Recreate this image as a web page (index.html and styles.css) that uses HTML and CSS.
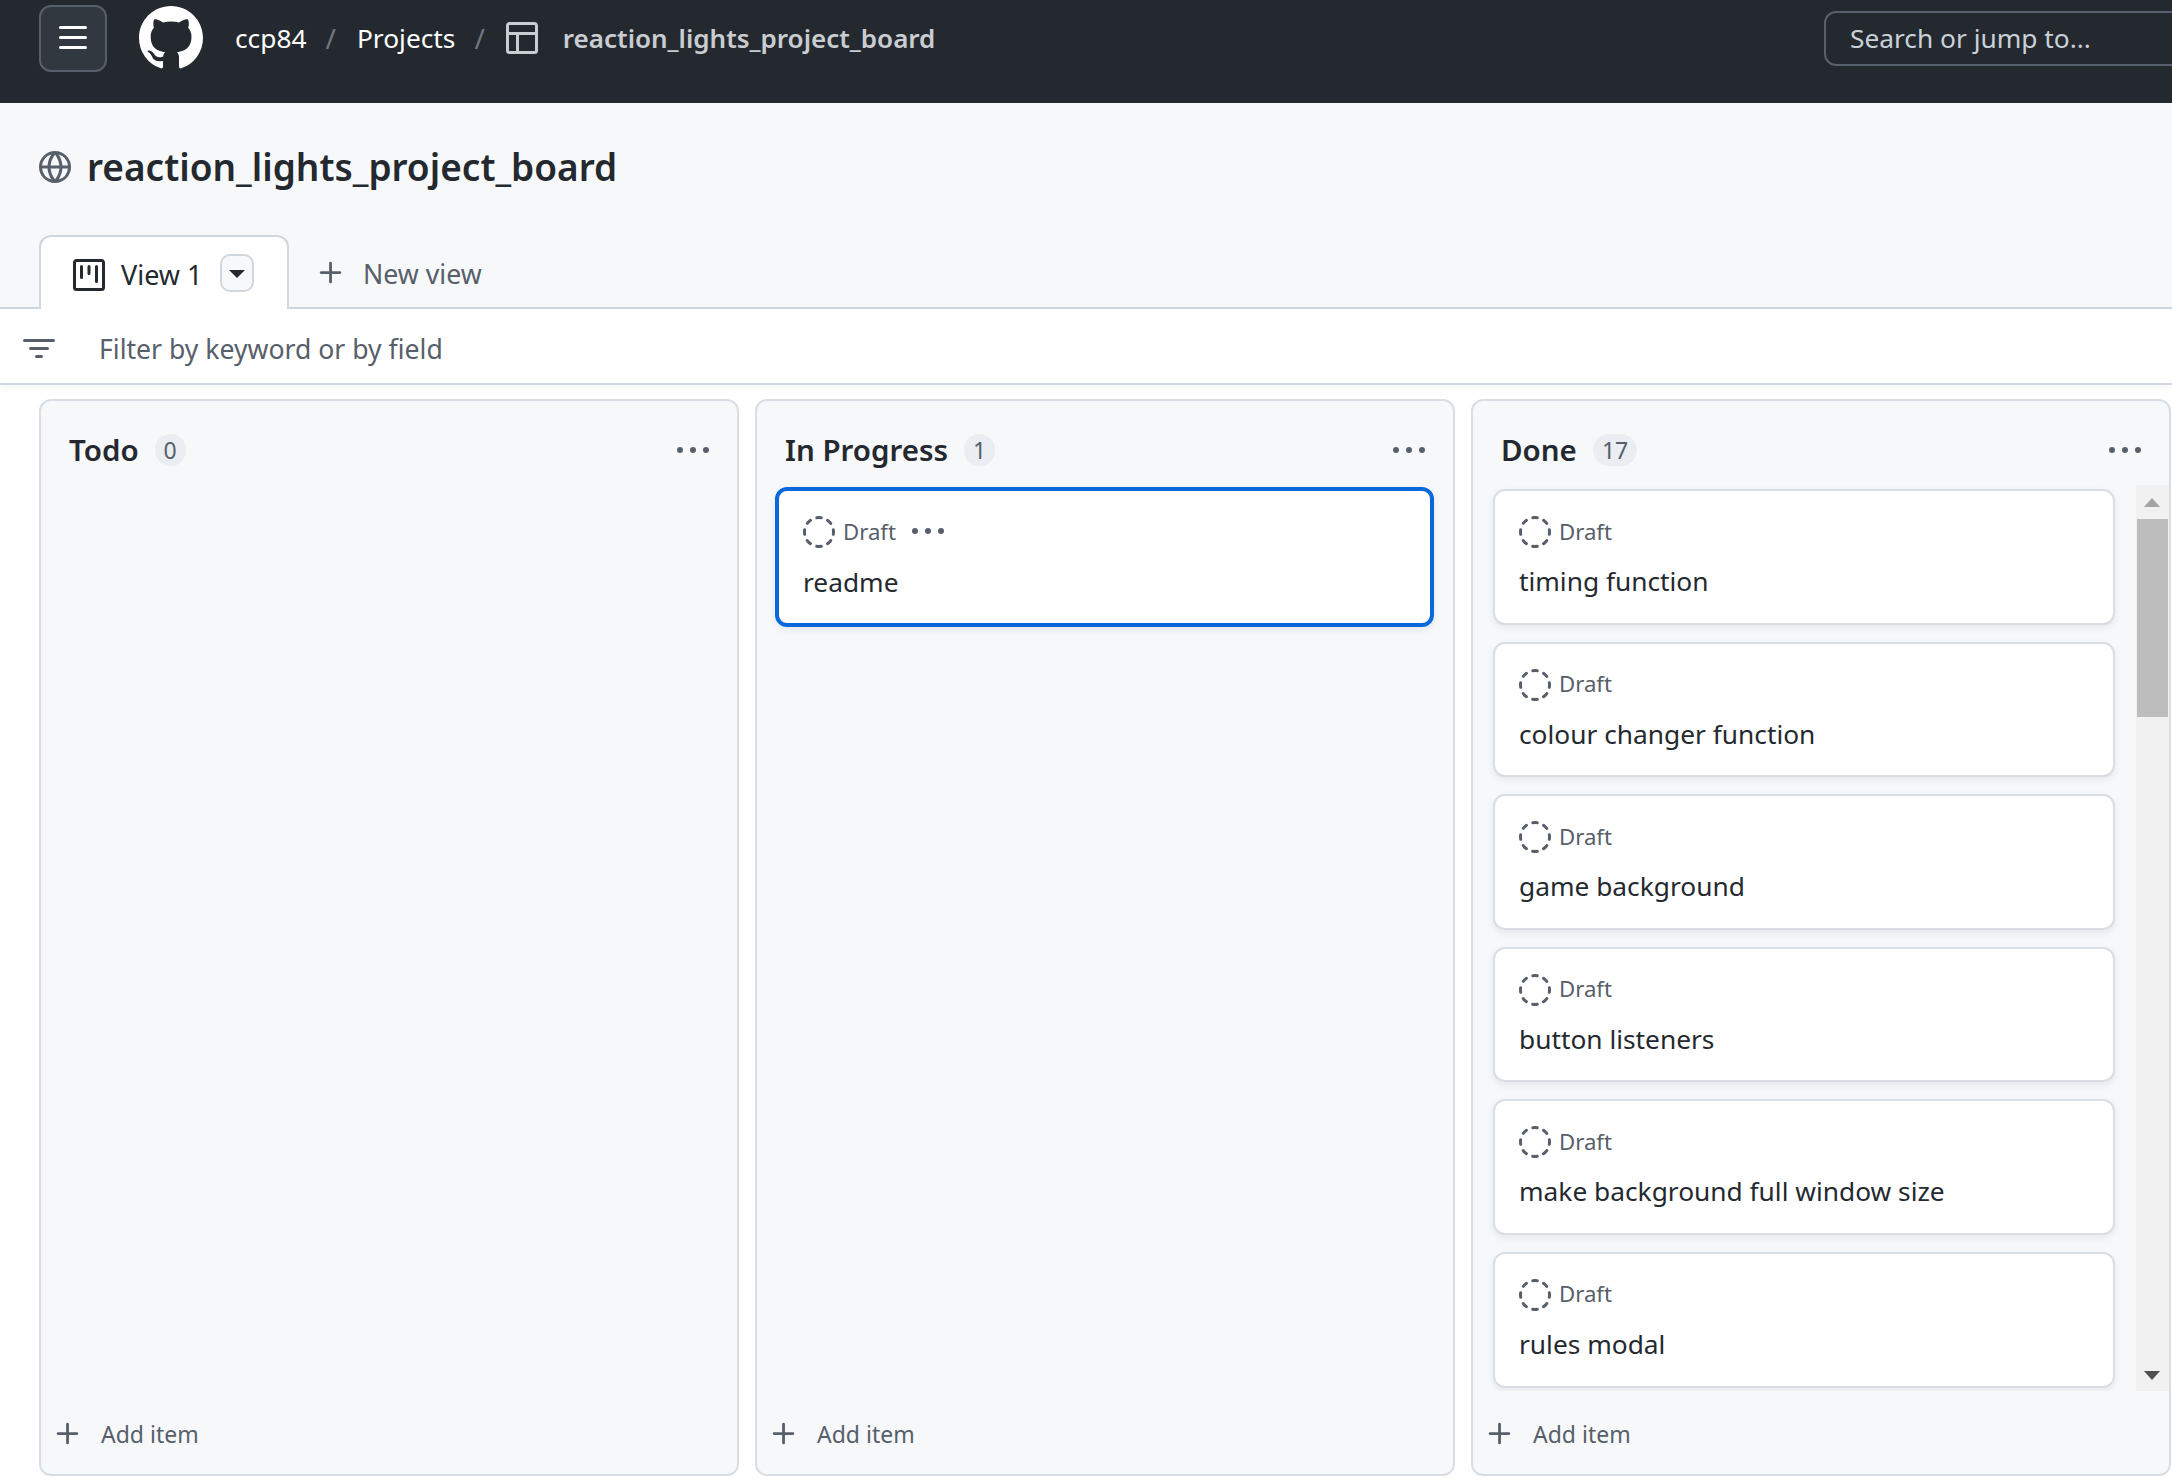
FILE: index.html
```html
<!DOCTYPE html>
<html lang="en">
<head>
<meta charset="utf-8">
<title>reaction_lights_project_board</title>
<link rel="stylesheet" href="styles.css">
</head>
<body>
<svg class="sprite" xmlns="http://www.w3.org/2000/svg">
  <symbol id="i-mark" viewBox="0 0 16 16"><path d="M8 0c4.42 0 8 3.58 8 8a8.013 8.013 0 0 1-5.45 7.59c-.4.08-.55-.17-.55-.38 0-.27.01-1.13.01-2.2 0-.75-.25-1.23-.54-1.48 1.78-.2 3.65-.88 3.65-3.95 0-.88-.31-1.59-.82-2.15.08-.2.36-1.02-.08-2.12 0 0-.67-.22-2.2.82-.64-.18-1.32-.27-2-.27-.68 0-1.36.09-2 .27-1.53-1.03-2.2-.82-2.2-.82-.44 1.1-.16 1.92-.08 2.12-.51.56-.82 1.28-.82 2.15 0 3.06 1.86 3.75 3.64 3.95-.23.2-.44.55-.51 1.07-.46.21-1.61.55-2.33-.66-.15-.24-.6-.83-1.23-.82-.67.01-.27.38.01.53.34.19.73.9.82 1.13.16.45.68 1.31 2.69.94 0 .67.01 1.3.01 1.49 0 .21-.15.45-.55.38A7.995 7.995 0 0 1 0 8c0-4.42 3.58-8 8-8Z"/></symbol>
  <symbol id="i-bars" viewBox="0 0 16 16"><path d="M1 2.75A.75.75 0 0 1 1.75 2h12.5a.75.75 0 0 1 0 1.5H1.75A.75.75 0 0 1 1 2.75Zm0 5A.75.75 0 0 1 1.75 7h12.5a.75.75 0 0 1 0 1.5H1.75A.75.75 0 0 1 1 7.75ZM1.75 12h12.5a.75.75 0 0 1 0 1.5H1.75a.75.75 0 0 1 0-1.5Z"/></symbol>
  <symbol id="i-table" viewBox="0 0 16 16"><path d="M0 1.75C0 .784.784 0 1.75 0h12.5C15.216 0 16 .784 16 1.75v12.5A1.75 1.75 0 0 1 14.25 16H1.75A1.75 1.75 0 0 1 0 14.25ZM6.5 6.5v8h7.75a.25.25 0 0 0 .25-.25V6.5Zm8-1.5V1.75a.25.25 0 0 0-.25-.25H1.75a.25.25 0 0 0-.25.25V5Zm-13 1.5v7.75c0 .138.112.25.25.25H5v-8Z"/></symbol>
  <symbol id="i-globe" viewBox="0 0 16 16"><path d="M8 0a8 8 0 1 1 0 16A8 8 0 0 1 8 0ZM5.78 8.75a9.64 9.64 0 0 0 1.363 4.177c.255.426.542.832.857 1.215.245-.296.551-.705.857-1.215A9.64 9.64 0 0 0 10.22 8.75Zm4.44-1.5a9.64 9.64 0 0 0-1.363-4.177c-.307-.51-.612-.919-.857-1.215a9.927 9.927 0 0 0-.857 1.215A9.64 9.64 0 0 0 5.78 7.25Zm-5.944 1.5H1.543a6.507 6.507 0 0 0 4.666 5.5c-.123-.181-.24-.365-.352-.552-.715-1.192-1.437-2.874-1.581-4.948Zm-2.733-1.5h2.733c.144-2.074.866-3.756 1.58-4.948.12-.197.237-.381.353-.552a6.507 6.507 0 0 0-4.666 5.5Zm10.181 1.5c-.144 2.074-.866 3.756-1.58 4.948-.12.197-.237.381-.353.552a6.507 6.507 0 0 0 4.666-5.5Zm2.733-1.5a6.507 6.507 0 0 0-4.666-5.5c.123.181.24.365.353.552.714 1.192 1.436 2.874 1.58 4.948Z"/></symbol>
  <symbol id="i-project" viewBox="0 0 16 16"><path d="M1.75 0h12.5C15.216 0 16 .784 16 1.75v12.5A1.75 1.75 0 0 1 14.25 16H1.75A1.75 1.75 0 0 1 0 14.25V1.75C0 .784.784 0 1.75 0ZM1.5 1.75v12.5c0 .138.112.25.25.25h12.5a.25.25 0 0 0 .25-.25V1.75a.25.25 0 0 0-.25-.25H1.75a.25.25 0 0 0-.25.25ZM11.75 3a.75.75 0 0 1 .75.75v7.5a.75.75 0 0 1-1.5 0v-7.5a.75.75 0 0 1 .75-.75Zm-8.25.75a.75.75 0 0 1 1.5 0v5.5a.75.75 0 0 1-1.5 0ZM8 3a.75.75 0 0 1 .75.75v3.5a.75.75 0 0 1-1.5 0v-3.5A.75.75 0 0 1 8 3Z"/></symbol>
  <symbol id="i-plus" viewBox="0 0 16 16"><path d="M7.75 2a.75.75 0 0 1 .75.75V7h4.25a.75.75 0 0 1 0 1.5H8.5v4.25a.75.75 0 0 1-1.5 0V8.5H2.75a.75.75 0 0 1 0-1.5H7V2.75A.75.75 0 0 1 7.75 2Z"/></symbol>
  <symbol id="i-filter" viewBox="0 0 16 16"><path d="M.75 3h14.5a.75.75 0 0 1 0 1.5H.75a.75.75 0 0 1 0-1.5ZM3 7.75A.75.75 0 0 1 3.75 7h8.5a.75.75 0 0 1 0 1.5h-8.5A.75.75 0 0 1 3 7.75Zm3 4a.75.75 0 0 1 .75-.75h2.5a.75.75 0 0 1 0 1.5h-2.5a.75.75 0 0 1-.75-.75Z"/></symbol>
  <symbol id="i-kebab" viewBox="0 0 16 16"><path d="M8 9a1.5 1.5 0 1 0 0-3 1.5 1.5 0 0 0 0 3ZM1.5 9a1.5 1.5 0 1 0 0-3 1.5 1.5 0 0 0 0 3Zm13 0a1.5 1.5 0 1 0 0-3 1.5 1.5 0 0 0 0 3Z"/></symbol>
  <symbol id="i-draft" viewBox="0 0 16 16"><path d="M14.307 11.655a.75.75 0 0 1 .165 1.048 8.05 8.05 0 0 1-1.769 1.77.75.75 0 0 1-.883-1.214 6.552 6.552 0 0 0 1.44-1.439.75.75 0 0 1 1.047-.165Zm-2.652-9.962a.75.75 0 0 1 1.048-.165 8.05 8.05 0 0 1 1.77 1.769.75.75 0 0 1-1.214.883 6.552 6.552 0 0 0-1.439-1.44.75.75 0 0 1-.165-1.047ZM6.749.097a8.074 8.074 0 0 1 2.502 0 .75.75 0 1 1-.233 1.482 6.558 6.558 0 0 0-2.036 0A.751.751 0 0 1 6.749.097ZM.955 6.125a.75.75 0 0 1 .624.857 6.558 6.558 0 0 0 0 2.036.75.75 0 1 1-1.482.233 8.074 8.074 0 0 1 0-2.502.75.75 0 0 1 .858-.624Zm14.09 0a.75.75 0 0 1 .858.624c.13.829.13 1.673 0 2.502a.75.75 0 1 1-1.482-.233 6.558 6.558 0 0 0 0-2.036.75.75 0 0 1 .624-.857Zm-8.92 8.92a.75.75 0 0 1 .857-.624 6.558 6.558 0 0 0 2.036 0 .75.75 0 1 1 .233 1.482c-.829.13-1.673.13-2.502 0a.75.75 0 0 1-.624-.858Zm-4.432-3.39a.75.75 0 0 1 1.048.165 6.552 6.552 0 0 0 1.439 1.44.751.751 0 0 1-.883 1.212 8.05 8.05 0 0 1-1.77-1.769.75.75 0 0 1 .166-1.048Zm2.652-9.962A.75.75 0 0 1 4.18 2.74a6.556 6.556 0 0 0-1.44 1.44.751.751 0 0 1-1.212-.883 8.05 8.05 0 0 1 1.769-1.77.75.75 0 0 1 1.048.166Z"/></symbol>
</svg>

<header class="topbar">
  <button class="menu-btn"><svg class="ic-32"><use href="#i-bars"/></svg></button>
  <svg class="logo"><use href="#i-mark"/></svg>
  <nav class="crumbs">
    <span class="crumb crumb-first">ccp84</span>
    <span class="slash">/</span>
    <span class="crumb">Projects</span>
    <span class="slash">/</span>
    <svg class="ic-32 crumb-icon"><use href="#i-table"/></svg>
    <span class="crumb crumb-current">reaction_lights_project_board</span>
  </nav>
  <div class="search">Search or jump to...</div>
</header>

<section class="sub">
  <div class="title-row">
    <svg class="ic-32 muted-ic"><use href="#i-globe"/></svg>
    <h1 class="page-title">reaction_lights_project_board</h1>
  </div>
  <div class="tabs">
    <div class="tab">
      <svg class="ic-32 dark-ic"><use href="#i-project"/></svg>
      <span class="tab-label">View 1</span>
      <span class="tab-drop"><span class="caret"></span></span>
    </div>
    <div class="new-view">
      <svg class="ic-30 muted-ic"><use href="#i-plus"/></svg>
      <span>New view</span>
    </div>
  </div>
</section>

<div class="filter">
  <svg class="ic-32 muted-ic"><use href="#i-filter"/></svg>
  <span>Filter by keyword or by field</span>
</div>

<main class="board">
  <section class="col">
    <div class="col-head">
      <h2 class="col-title">Todo</h2><span class="count">0</span>
      <svg class="ic-32 muted-ic col-menu"><use href="#i-kebab"/></svg>
    </div>
    <div class="col-body"></div>
    <div class="add"><svg class="ic-30 muted-ic"><use href="#i-plus"/></svg><span>Add item</span></div>
  </section>

  <section class="col">
    <div class="col-head">
      <h2 class="col-title">In Progress</h2><span class="count">1</span>
      <svg class="ic-32 muted-ic col-menu"><use href="#i-kebab"/></svg>
    </div>
    <div class="col-body body-progress">
      <article class="card card-focus">
        <div class="card-meta"><svg class="ic-32 muted-ic"><use href="#i-draft"/></svg><span class="draft">Draft</span><svg class="ic-32 muted-ic card-menu"><use href="#i-kebab"/></svg></div>
        <div class="card-title">readme</div>
      </article>
    </div>
    <div class="add"><svg class="ic-30 muted-ic"><use href="#i-plus"/></svg><span>Add item</span></div>
  </section>

  <section class="col">
    <div class="col-head">
      <h2 class="col-title">Done</h2><span class="count">17</span>
      <svg class="ic-32 muted-ic col-menu"><use href="#i-kebab"/></svg>
    </div>
    <div class="col-body body-done">
      <div class="card-list">
        <article class="card"><div class="card-meta"><svg class="ic-32 muted-ic"><use href="#i-draft"/></svg><span class="draft">Draft</span></div><div class="card-title">timing function</div></article>
        <article class="card"><div class="card-meta"><svg class="ic-32 muted-ic"><use href="#i-draft"/></svg><span class="draft">Draft</span></div><div class="card-title">colour changer function</div></article>
        <article class="card"><div class="card-meta"><svg class="ic-32 muted-ic"><use href="#i-draft"/></svg><span class="draft">Draft</span></div><div class="card-title">game background</div></article>
        <article class="card"><div class="card-meta"><svg class="ic-32 muted-ic"><use href="#i-draft"/></svg><span class="draft">Draft</span></div><div class="card-title">button listeners</div></article>
        <article class="card"><div class="card-meta"><svg class="ic-32 muted-ic"><use href="#i-draft"/></svg><span class="draft">Draft</span></div><div class="card-title">make background full window size</div></article>
        <article class="card"><div class="card-meta"><svg class="ic-32 muted-ic"><use href="#i-draft"/></svg><span class="draft">Draft</span></div><div class="card-title">rules modal</div></article>
      </div>
      <div class="scrollbar">
        <span class="arrow-up"></span>
        <span class="thumb"></span>
        <span class="arrow-down"></span>
      </div>
    </div>
    <div class="add"><svg class="ic-30 muted-ic"><use href="#i-plus"/></svg><span>Add item</span></div>
  </section>
</main>
</body>
</html>
```

FILE: styles.css
```css
* { box-sizing: border-box; }
html, body { margin: 0; height: 100%; overflow: hidden; }
body {
  background: #fff;
  color: #24292f;
  font-family: "Noto Sans", "Open Sans", sans-serif;
  font-size: 26.3px;
}
.sprite { display: none; }
svg { fill: currentColor; flex: none; display: block; }
.ic-32 { width: 32px; height: 32px; }
.ic-30 { width: 30px; height: 30px; }
.muted-ic { color: #57606a; }
.dark-ic { color: #24292f; }

/* top bar */
.topbar {
  height: 103px;
  padding: 3px 0 30px 39px;
  display: flex;
  align-items: center;
  background: #24292f;
  color: #fff;
  overflow: hidden;
}
.menu-btn {
  width: 68px;
  height: 67px;
  display: flex;
  align-items: center;
  justify-content: center;
  padding: 0;
  color: #fff;
  background: #32383f;
  border: 2px solid #57606a;
  border-radius: 12px;
}
.logo { width: 64px; height: 64px; margin-left: 32px; color: #fff; }
.crumbs {
  display: flex;
  align-items: center;
  margin-left: 32px;
  font-size: 26.3px;
}
.crumb { white-space: nowrap; }
.slash { color: #6e7681; margin: 0 21px 0 19px; font-size: 28px; }
.crumb-icon { color: #c9ccd0; margin: 0 25px 0 0; }
.crumb-current { color: #c9ccd0; font-size: 26px; font-weight: 600; }
.search {
  width: 500px;
  height: 55px;
  margin-left: auto;
  margin-right: -152px;
  padding-left: 24px;
  display: flex;
  align-items: center;
  flex: none;
  color: #c9d1d9;
  border: 2px solid #57606a;
  border-radius: 12px;
}

/* project title and tabs */
.sub { background: #f6f8fa; }
.title-row {
  height: 132px;
  padding: 40px 0 44px 39px;
  display: flex;
  align-items: center;
  gap: 16px;
}
.page-title { margin: 0; font-size: 37px; font-weight: 600; line-height: 48px; }
.tabs {
  height: 74px;
  padding-left: 39px;
  display: flex;
  border-bottom: 2px solid #d0d7de;
}
.tab {
  width: 250px;
  height: 74px;
  padding: 4px 0 0 32px;
  display: flex;
  align-items: center;
  background: #fff;
  border: 2px solid #d0d7de;
  border-bottom: 0;
  border-radius: 12px 12px 0 0;
}
.tab-label { margin: -2px 0 0 16px; width: 81px; font-size: 27px; white-space: nowrap; }
.tab-drop {
  width: 34px;
  height: 38px;
  margin: -5px 0 0 18px;
  display: flex;
  align-items: center;
  justify-content: center;
  background: #f6f8fa;
  border: 2px solid #d0d7de;
  border-radius: 10px;
}
.caret {
  width: 0;
  height: 0;
  margin-top: 3px;
  border: 8px solid transparent;
  border-top: 8px solid #24292f;
  border-bottom: 0;
}
.new-view {
  margin-left: 27px;
  padding-top: 4px;
  display: flex;
  align-items: center;
  gap: 17px;
  font-size: 26.7px;
  color: #57606a;
}

/* filter */
.filter {
  height: 76px;
  padding: 6px 0 0 23px;
  display: flex;
  align-items: center;
  gap: 44px;
  font-size: 26.6px;
  color: #57606a;
  border-bottom: 2px solid #d0d7de;
  box-shadow: 0 3px 6px rgba(140, 149, 159, 0.08);
}

/* board */
.board {
  padding: 14px 0 0 39px;
  display: grid;
  grid-template-columns: repeat(3, 699.5px);
  column-gap: 16.5px;
}
.col {
  height: 1077px;
  display: flex;
  flex-direction: column;
  background: #f6f8fa;
  border: 2px solid #d8dee4;
  border-radius: 12px;
  overflow: hidden;
}
.col-head {
  height: 84px;
  padding: 32px 28px 18px 28px;
  display: flex;
  align-items: center;
}
.col-title { margin: 0; font-size: 29.5px; font-weight: 600; line-height: 34px; }
.count {
  min-width: 29px;
  height: 32px;
  margin-left: 16px;
  padding: 0 9px;
  display: flex;
  align-items: center;
  justify-content: center;
  font-size: 23px;
  color: #57606a;
  background: #eaeef2;
  border-radius: 16px;
}
.col-menu { margin-left: auto; position: relative; top: 1px; }
.col-body { flex: 1; min-height: 0; }
.body-progress { padding: 2px 19px 0 18px; }
.body-done { display: flex; }
.card-list {
  flex: 1;
  min-width: 0;
  padding: 4px 21px 0 20px;
  display: flex;
  flex-direction: column;
  gap: 17px;
  overflow: hidden;
}
.card {
  height: 135.6px;
  flex: none;
  padding: 25px 24px 0;
  background: #fff;
  border: 2px solid #d8dee4;
  border-radius: 12px;
  box-shadow: 0 3px 6px rgba(140, 149, 159, 0.15);
}
.card-focus { height: 140px; padding-top: 25px; border: 4px solid #0969da; }
.card-focus .card-title { margin-top: 16px; }
.card-meta { display: flex; align-items: center; height: 32px; }
.draft { margin: -2px 0 0 8px; font-size: 22.2px; color: #57606a; }
.card-menu { margin-left: 16px; }
.card-title { margin-top: 15px; line-height: 36px; white-space: nowrap; }

.scrollbar {
  width: 33px;
  flex: none;
  padding: 13px 0 11px;
  display: flex;
  flex-direction: column;
  align-items: center;
  background: #f1f1f1;
}
.arrow-up {
  width: 0;
  height: 0;
  border: 8px solid transparent;
  border-top: 0;
  border-bottom: 9px solid #a3a3a3;
}
.thumb {
  width: 31px;
  height: 198px;
  margin-top: 12px;
  background: #bdbdbd;
}
.arrow-down {
  width: 0;
  height: 0;
  margin-top: auto;
  border: 8px solid transparent;
  border-bottom: 0;
  border-top: 9px solid #505050;
}
.add {
  height: 83px;
  padding: 3px 0 0 12px;
  display: flex;
  align-items: center;
  gap: 18px;
  font-size: 23px;
  color: #57606a;
}
```
